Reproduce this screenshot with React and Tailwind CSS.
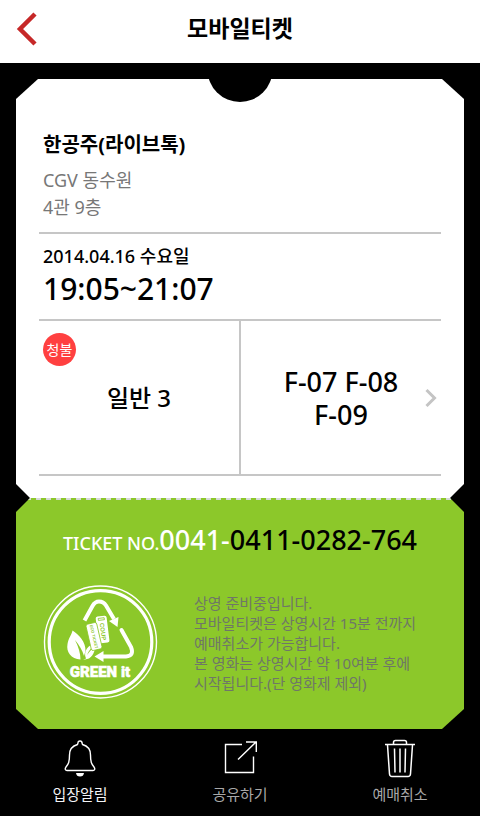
import React from "react";

const details = [
  "상영 준비중입니다.",
  "모바일티켓은 상영시간 15분 전까지",
  "예매취소가 가능합니다.",
  "본 영화는 상영시간 약 10여분 후에",
  "시작됩니다.(단 영화제 제외)",
];

function GreenItLogo() {
  return (
    <svg className="h-[116px] w-[116px] shrink-0" viewBox="0 0 116 116" fill="none" role="img" aria-label="GREEN it">
      <circle cx="57.500" cy="57" r="56" stroke="#fff" strokeWidth="1.4" />
      <circle cx="57.500" cy="57" r="51.3" stroke="#fff" strokeWidth="3.2" />
      {/* arrows */}
      <g stroke="#fff" strokeWidth="4">
        <path d="M41.500 35.500 L49.500 21 Q52 16.500 56 16.500 Q60.500 16.500 63 20.500 L71 34" />
        <path d="M78.500 45 L88 62 Q91.500 71 83 71.500 L60 71.500" strokeLinecap="round" />
      </g>
      <path d="M66 36 L75.500 32 L74.500 42 Z" fill="#fff" />
      <path d="M51.500 71.500 L60.500 66 V77 Z" fill="#fff" />
      {/* leaf */}
      <path d="M29.500 45.500 C36 50 43 57 42.500 66 L41 71 C39.500 65 36 60 32 55 C35.500 62 37.500 68 37.500 74.500 C28 74 23 67 24.500 59 C25.500 53 28.500 50 29.500 45.500 Z" fill="#fff" />
      <path d="M43 73.500 C40 67 44.500 59.500 54 57.500 C49.500 61 45.500 65.500 44 70 C48 65 50.500 62 54 58.500 C51.500 64 51.500 70 46 73.500 L40 75 Z" fill="#fff" />
      {/* tickets */}
      <g transform="rotate(-7 59.500 44)">
        <rect x="54" y="31" width="11" height="27" rx="2" fill="#fff" />
        <rect x="56.500" y="33" width="6" height="2" stroke="#8cc82a" strokeWidth="0.8" />
        <text x="0" y="0" transform="translate(57.500 38) rotate(90)" fill="#8cc82a" fontSize="6" fontWeight="700" fontFamily="Liberation Sans, sans-serif">COUP</text>
      </g>
      <g transform="rotate(-13 51 51.500)">
        <rect x="45.500" y="38" width="11" height="27" rx="2" fill="#fff" stroke="#8cc82a" strokeWidth="0.8" />
        <text x="0" y="0" transform="translate(49.500 39.500) rotate(90)" fill="#8cc82a" fontSize="4" fontWeight="700" fontFamily="Liberation Sans, sans-serif">ECO TICKET</text>
      </g>
      <text x="57" y="92" textAnchor="middle" fill="#fff" stroke="#fff" strokeWidth="0.5" fontSize="15" fontWeight="900" fontFamily="Roboto, sans-serif">GREEN it</text>
    </svg>
  );
}

function BellIcon() {
  return (
    <svg className="h-10 w-10" viewBox="0 0 40 40" fill="none" stroke="#fff" strokeWidth="1.4">
      <path d="M18 5 Q18 3 20 3 Q22 3 22 5 L22.500 6.500 C28 8 30.500 12 30.500 17 C30.500 24 31.500 26 34 29 C35.500 31 34.500 32.500 33 32.500 H7 C5.500 32.500 4.500 31 6 29 C8.500 26 9.500 24 9.500 17 C9.500 12 12 8 17.500 6.500 Z" />
      <path d="M16 35 H24 Q23.500 38.500 20 38.500 Q16.500 38.500 16 35 Z" fill="#fff" stroke="none" />
    </svg>
  );
}

function ShareIcon() {
  return (
    <svg className="h-10 w-10" viewBox="0 0 40 40" fill="none" stroke="#fff" strokeWidth="1.4">
      <path d="M22 6.500 H5.500 V34.500 H33.500 V18.500" />
      <path d="M18 21.500 L36 4 M26 4 H36.300 V14" />
    </svg>
  );
}

function TrashIcon() {
  return (
    <svg className="h-10 w-10" viewBox="0 0 40 40" fill="none" stroke="#fff" strokeWidth="1.5">
      <path d="M5 6.500 H35 M13.500 6 V4.500 Q13.500 2.500 15.500 2.500 H24.500 Q26.500 2.500 26.500 4.500 V6" />
      <path d="M7.500 7 L9.500 36 Q9.800 38.500 12 38.500 H28 Q30.200 38.500 30.500 36 L32.500 7" />
      <path d="M14.500 10.500 L15 34.500 M20 10.500 V34.500 M25.500 10.500 L25 34.500" />
    </svg>
  );
}

const actions = [
  { label: "입장알림", icon: BellIcon, color: "text-gray-100" },
  { label: "공유하기", icon: ShareIcon, color: "text-[#a8a8a8]" },
  { label: "예매취소", icon: TrashIcon, color: "text-[#a8a8a8]" },
];

export default function App() {
  return (
    <div className="flex min-h-screen flex-col bg-black font-['Noto_Sans','Noto_Sans_CJK_KR',sans-serif] text-black">
      <header className="grid h-[63px] grid-cols-[64px_1fr_64px] items-center bg-white pb-1">
        <button type="button" aria-label="뒤로" className="pl-4">
          <svg className="h-9 w-6" viewBox="0 0 24 36" fill="none" stroke="#c62828" strokeWidth="4.500">
            <path d="M19 2 L4 17 L19 32" />
          </svg>
        </button>
        <h1 className="pb-1 text-center text-[23px] leading-8 font-bold">모바일티켓</h1>
      </header>

      <main className="px-4 pt-4">
        {/* Ticket top */}
        <section className="relative bg-white px-[23px] pt-[52px] pb-[22px] [clip-path:polygon(22px_0,calc(100%-22px)_0,100%_20px,100%_calc(100%-14px),calc(100%-14px)_100%,14px_100%,0_calc(100%-14px),0_20px)]">
          <div className="absolute -top-[42px] left-1/2 h-[65px] w-[65px] -translate-x-1/2 rounded-full bg-black" />

          <div className="border-b-2 border-[#c6c6c6] px-1 pb-[11px]">
            <h2 className="mb-2 text-xl leading-7 font-bold">한공주(라이브톡)</h2>
            <p className="text-lg leading-[27px] text-[#777]">CGV 동수원</p>
            <p className="text-lg leading-[27px] text-[#777]">4관 9층</p>
          </div>

          <div className="border-b-2 border-[#c6c6c6] px-1 pt-2 pb-[11px]">
            <p className="text-lg leading-7 font-medium">2014.04.16 수요일</p>
            <p className="text-3xl leading-[38px] font-medium">19:05~21:07</p>
          </div>

          <div className="grid h-[155px] grid-cols-[1fr_200px] border-b-2 border-[#c6c6c6]">
            <div className="relative flex items-center justify-center border-r-2 border-[#c6c6c6]">
              <span className="absolute top-3 left-1 flex h-[33px] w-[33px] items-center justify-center rounded-full bg-[#ff4040] text-sm text-white">
                청불
              </span>
              <p className="text-2xl font-medium">일반 3</p>
            </div>
            <button type="button" className="relative text-[27px] leading-[33px] font-medium">
              <span className="block">F-07 F-08</span>
              <span className="block">F-09</span>
              <svg className="absolute top-1/2 right-1 h-5 w-3 -translate-y-1/2" viewBox="0 0 12 20" fill="none" stroke="#c4c4c4" strokeWidth="3">
                <path d="M1.500 2 L9.500 10 L1.500 18" />
              </svg>
            </button>
          </div>
        </section>

        {/* Ticket bottom */}
        <section className="bg-[#8cc82a] pb-7 [clip-path:polygon(14px_0,calc(100%-14px)_0,100%_14px,100%_calc(100%-20px),calc(100%-22px)_100%,22px_100%,0_calc(100%-20px),0_14px)]">
          <div className="h-[2px] bg-[repeating-linear-gradient(90deg,#d5d8d5_0_5px,transparent_5px_10px)]" />
          <p className="mt-5 flex items-baseline justify-center leading-10 font-medium whitespace-nowrap">
            <span className="text-lg text-white">TICKET NO.</span>
            <span className="text-[27px] text-white">0041-</span>
            <span className="text-[27px]">0411-0282-764</span>
          </p>
          <div className="mt-[25px] flex pl-[27px]">
            <GreenItLogo />
            <div className="ml-[35px] pt-2 text-[15px] leading-5 whitespace-nowrap text-[#6f7767]">
              {details.map((line) => (
                <p key={line}>{line}</p>
              ))}
            </div>
          </div>
        </section>
      </main>

      <nav className="grid grid-cols-3 pt-[9px]">
        {actions.map(({ label, icon: Icon, color }) => (
          <button key={label} type="button" className={`flex flex-col items-center gap-1 text-[15px] leading-6 ${color}`}>
            <Icon />
            {label}
          </button>
        ))}
      </nav>
    </div>
  );
}
